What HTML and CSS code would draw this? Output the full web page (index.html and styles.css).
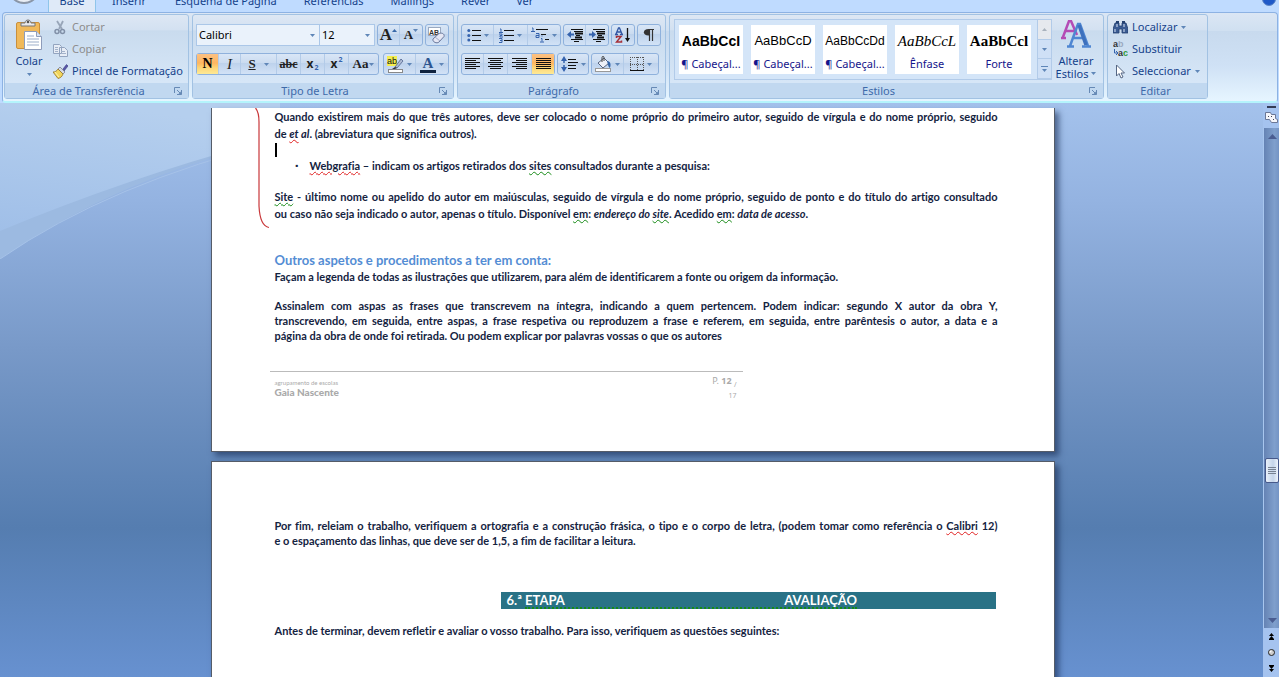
FILE: index.html
```html
<!DOCTYPE html>
<html lang="pt">
<head>
<meta charset="utf-8">
<title>Documento</title>
<link rel="stylesheet" href="styles.css">
</head>
<body>
<svg class="defs" aria-hidden="true">
  <symbol id="arrow" viewBox="0 0 5 3"><path d="M0 0h5L2.500 3z" fill="#5f86b8"/></symbol>
  <symbol id="launcher" viewBox="0 0 8 8"><path d="M.5 6V.5H6" fill="none" stroke="#6689b5"/><path d="M3 3l3 3M7.500 3v4.500H3" fill="none" stroke="#6689b5"/><path d="M4 7.500h3.500V4z" fill="#6689b5"/></symbol>
</svg>

<header class="tabs">
  <button class="office" aria-label="Botão Office"></button>
  <nav class="tablist">
    <a class="tab active" href="#base">Base</a>
    <a class="tab t-inserir" href="#inserir">Inserir</a>
    <a class="tab t-esquema" href="#esquema">Esquema de Página</a>
    <a class="tab t-ref" href="#referencias">Referências</a>
    <a class="tab t-mail" href="#mailings">Mailings</a>
    <a class="tab t-rever" href="#rever">Rever</a>
    <a class="tab" href="#ver">Ver</a>
  </nav>
  <button class="help" aria-label="Ajuda"></button>
</header>

<section class="ribbon">
  <section class="group g-clip">
    <div class="clip-body">
      <button class="big">
        <svg width="28" height="32" viewBox="0 0 28 32"><rect x="1.500" y="3.500" width="23" height="26" rx="1.500" fill="#f0b95a" stroke="#c98f3c"/><path d="M6 7V4h4c0-4 6-4 6 0h4v3z" fill="#e8e8ea" stroke="#777"/><circle cx="13" cy="3" r="1.300" fill="#555"/><path d="M9.500 12.500h12l5 5v13h-17z" fill="#fff" stroke="#8e9cba"/><path d="M21.500 12.500v5h5" fill="#d8e2f0" stroke="#8e9cba"/><path d="M12 17h7M12 20h12M12 23h12M12 26h12" stroke="#9badc9"/></svg>
        <span>Colar</span>
        <svg class="arr" width="5" height="3"><use href="#arrow"/></svg>
      </button>
      <div class="stack">
        <button class="cmd off"><svg width="15" height="15" viewBox="0 0 15 15"><path d="M4 1l5 8M10 1L6 9" stroke="#98a5b8" stroke-width="1.800"/><circle cx="4" cy="11.500" r="2" fill="none" stroke="#8190a8" stroke-width="1.500"/><circle cx="9.500" cy="11.500" r="2" fill="none" stroke="#8190a8" stroke-width="1.500"/></svg>Cortar</button>
        <button class="cmd off"><svg width="15" height="15" viewBox="0 0 15 15"><path d="M.5 2.500h6l2 2v7h-8zM6.500 5.500h5l3 3v6h-8z" fill="#e7edf6" stroke="#93a4bf"/><path d="M2 5.500h3M2 7.500h3M2 9.500h3M8 9.500h4M8 11.500h5" stroke="#a3b2ca"/></svg>Copiar</button>
        <button class="cmd"><svg width="15" height="15" viewBox="0 0 15 15"><path d="M10 5l3.500-4.500L15 2l-4 5z" fill="#5a55a8" stroke="#333a80" stroke-width=".6"/><path d="M7 3l5 5-2 2-5-5z" fill="#d5d9e4" stroke="#6a7080" stroke-width=".7"/><path d="M5 5l5 5c-1 3-3 4-5 4.500L0 8c2 0 4-1 5-3z" fill="#f1d55b" stroke="#94762b" stroke-width=".8"/><path d="M2 8l4 5" stroke="#fff4af"/></svg>Pincel de Formatação</button>
      </div>
    </div>
    <footer class="caption"><span>Área de Transferência</span><button class="launch" aria-label="Abrir Área de Transferência"><svg width="8" height="8"><use href="#launcher"/></svg></button></footer>
  </section>

  <section class="group g-font">
    <div class="rows">
      <div class="row">
        <div class="combos">
          <span class="combo c-name"><select aria-label="Tipo de letra"><option>Calibri</option></select><svg width="5" height="3"><use href="#arrow"/></svg></span>
          <span class="combo c-size"><select aria-label="Tamanho"><option>12</option></select><svg width="5" height="3"><use href="#arrow"/></svg></span>
        </div>
        <div class="set">
          <button class="b22 serif grow" aria-label="Aumentar">A<svg width="5" height="3" viewBox="0 0 5 3"><path d="M0 3h5L2.500 0z" fill="#3868a8"/></svg></button>
          <button class="b22 serif shrink" aria-label="Diminuir">A<svg width="5" height="3"><use href="#arrow"/></svg></button>
        </div>
        <div class="set">
          <button class="b22" aria-label="Limpar formatação"><svg width="18" height="18" viewBox="0 0 18 18"><rect x=".5" y="1.500" width="12" height="8" fill="#fff" stroke="#9aa9c0"/><text x="1" y="8.500" font-size="7" font-weight="700" font-family="Liberation Sans" fill="#333">AB</text><path d="M5 13l6-5.500c2-1 6 0 5 3L11 16c-2 2-7 0-6-3z" fill="#e5e7f4" stroke="#6a789c"/><path d="M7 11l5 4" stroke="#a5aecb"/></svg></button>
        </div>
      </div>
      <div class="row">
        <div class="set">
          <button class="b22 serif on heavy">N</button>
          <button class="b22 serif it">I</button>
          <button class="b36 serif un"><u>S</u><svg width="5" height="3"><use href="#arrow"/></svg></button>
          <button class="b24 serif st"><s>abc</s></button>
          <button class="b24 sx">x<small class="low">2</small></button>
          <button class="b24 sx">x<small class="high">2</small></button>
          <button class="b28 serif aa">Aa<svg width="5" height="3"><use href="#arrow"/></svg></button>
        </div>
        <div class="set">
          <button class="b32" aria-label="Realce"><svg width="17" height="17" viewBox="0 0 17 17"><rect width="10" height="10" fill="#f4ee4e"/><text x="0" y="8" font-size="9" font-family="Liberation Sans" fill="#111">ab</text><path d="M8 11l6-8 2 2-6 7z" fill="#aebbd4" stroke="#4f628c" stroke-width=".8"/><path d="M5 13l3-2 2 1-2 1z" fill="#333"/><rect x="1.500" y="13.500" width="14" height="3" fill="#fff" stroke="#888"/></svg><svg width="5" height="3"><use href="#arrow"/></svg></button>
          <button class="b32 serif ink"><span>A</span><svg width="5" height="3"><use href="#arrow"/></svg></button>
        </div>
      </div>
    </div>
    <footer class="caption"><span>Tipo de Letra</span><button class="launch" aria-label="Abrir Tipo de Letra"><svg width="8" height="8"><use href="#launcher"/></svg></button></footer>
  </section>

  <section class="group g-para">
    <div class="rows">
      <div class="row">
        <div class="set">
          <button class="b32" aria-label="Marcas"><svg width="14" height="14" viewBox="0 0 14 14"><path d="M5 2.500h9M5 7.500h9M5 12.500h9" stroke="#111"/><g fill="#3563ad"><circle cx="1.800" cy="2.500" r="1.500"/><circle cx="1.800" cy="7.500" r="1.500"/><circle cx="1.800" cy="12" r="1.500"/></g></svg><svg width="5" height="3"><use href="#arrow"/></svg></button>
          <button class="b34" aria-label="Numeração"><svg width="15" height="15" viewBox="0 0 15 15"><path d="M5 2.500h10M5 7.500h10M5 12.500h10" stroke="#111"/><path d="M1 1h1v3M0 4.500h4M0 6h3v1.500H1V9h3M0 10.500h3v4H0M1 12.500h2" stroke="#3563ad" fill="none"/></svg><svg width="5" height="3"><use href="#arrow"/></svg></button>
          <button class="b32" aria-label="Lista multinível"><svg width="18" height="16" viewBox="0 0 18 16"><path d="M5 2.500h12M10 7.500h5M14 12.500h4" stroke="#111"/><path d="M1 1h1v3M0 4.500h4M5 6.500h3v4H5v-2h3M11 8.500v1M10 11.500h1v3M9 15h4" stroke="#3563ad" fill="none"/></svg><svg width="5" height="3"><use href="#arrow"/></svg></button>
        </div>
        <div class="set">
          <button class="b22" aria-label="Diminuir avanço"><svg width="16" height="14" viewBox="0 0 16 14"><path d="M4 1.500h12M7 3.500h9M9 7.500h4M4 11.500h12M7 13.500h5" stroke="#111"/><path d="M8 5.500h8M8 9.500h7" stroke="#111" stroke-width="2"/><path d="M0 6.500L4 3v7z" fill="#3563ad"/><path d="M3 6.500h4" stroke="#3563ad" stroke-width="2"/></svg></button>
          <button class="b22" aria-label="Aumentar avanço"><svg width="16" height="14" viewBox="0 0 16 14"><path d="M4 1.500h12M7 3.500h9M9 7.500h4M4 11.500h12M7 13.500h5" stroke="#111"/><path d="M8 5.500h8M8 9.500h7" stroke="#111" stroke-width="2"/><path d="M7 6.500L3 3v7z" fill="#3563ad"/><path d="M0 6.500h4" stroke="#3563ad" stroke-width="2"/></svg></button>
        </div>
        <div class="set">
          <button class="b22" aria-label="Ordenar"><svg width="16" height="16" viewBox="0 0 16 16"><path d="M1 7L3.500 1h1L7 7M2 5h4M0 7.500h3M5 7.500h3" stroke="#3157a3" fill="none" stroke-width="1.300"/><path d="M1.500 11V9.500H6L1.500 15H6.500v-1.500" stroke="#a52f38" fill="none" stroke-width="1.500"/><path d="M12.500 1v11" stroke="#111" stroke-width="1.300"/><path d="M10 11h5l-2.500 4z" fill="#111"/></svg></button>
        </div>
        <div class="set">
          <button class="b22" aria-label="Mostrar tudo"><svg width="12" height="14" viewBox="0 0 12 14"><path d="M11 1.500H5.500M6.500 1v12M9.500 1v12" stroke="#333" stroke-width="1.200"/><path d="M7 1C-1 0-1 8 6 7.500z" fill="#333"/></svg></button>
        </div>
      </div>
      <div class="row">
        <div class="set">
          <button class="b22" aria-label="Esquerda"><svg width="15" height="12" viewBox="0 0 15 12"><path d="M0 .5h15M0 2.500h11M0 4.500h15M0 6.500h11M0 8.500h15M0 10.500h11" stroke="#111"/></svg></button>
          <button class="b24" aria-label="Centrar"><svg width="15" height="12" viewBox="0 0 15 12"><path d="M0 .5h15M2 2.500h11M0 4.500h15M2 6.500h11M0 8.500h15M2 10.500h11" stroke="#111"/></svg></button>
          <button class="b24" aria-label="Direita"><svg width="15" height="12" viewBox="0 0 15 12"><path d="M0 .5h15M4 2.500h11M0 4.500h15M4 6.500h11M0 8.500h15M4 10.500h11" stroke="#111"/></svg></button>
          <button class="b22 on" aria-label="Justificar"><svg width="15" height="12" viewBox="0 0 15 12"><path d="M0 .5h15M0 2.500h15M0 4.500h15M0 6.500h15M0 8.500h15M0 10.500h15" stroke="#111"/></svg></button>
        </div>
        <div class="set">
          <button class="b30" aria-label="Espaçamento"><svg width="17" height="16" viewBox="0 0 17 16"><path d="M7 3.500h8M7 6.500h10M7 9.500h8M7 12.500h8" stroke="#111"/><path d="M0 5L3 0l3 5zM0 11l3 5 3-5z" fill="#3563ad"/><path d="M3 4v3M3 9v3" stroke="#3563ad" stroke-width="1.500"/></svg><svg width="5" height="3"><use href="#arrow"/></svg></button>
        </div>
        <div class="set tail">
          <button class="b32" aria-label="Sombreado"><svg width="17" height="16" viewBox="0 0 17 16"><path d="M3 7l6-5 5 5-6 5z" fill="#eef1f8" stroke="#55627c"/><path d="M7 6V1.500C7 0 9 0 9 1.500V5" fill="none" stroke="#444"/><path d="M12 5c4 0 4 4 3 7-2-1-2-4-3-7z" fill="#3465a8"/><rect x=".5" y="12.500" width="15" height="3" fill="#fff" stroke="#999"/></svg><svg width="5" height="3"><use href="#arrow"/></svg></button>
          <button class="b34" aria-label="Limites"><svg width="14" height="15" viewBox="0 0 14 15"><path d="M0 .5h14M0 7.500h14M.5 0v13M7.500 0v13M13.500 0v13" stroke="#555" stroke-dasharray="1 1"/><path d="M0 13.500h14" stroke="#111"/></svg><svg width="5" height="3"><use href="#arrow"/></svg></button>
        </div>
      </div>
    </div>
    <footer class="caption"><span>Parágrafo</span><button class="launch" aria-label="Abrir Parágrafo"><svg width="8" height="8"><use href="#launcher"/></svg></button></footer>
  </section>

  <section class="group g-styles">
    <div class="styles-body">
      <div class="gallery">
        <div class="cells">
          <button class="cell"><b class="s1">AaBbCcI</b><span>¶ Cabeçal...</span></button>
          <button class="cell"><b class="s2">AaBbCcD</b><span>¶ Cabeçal...</span></button>
          <button class="cell"><b class="s3">AaBbCcDd</b><span>¶ Cabeçal...</span></button>
          <button class="cell"><b class="s4">AaBbCcL</b><span>Ênfase</span></button>
          <button class="cell"><b class="s5">AaBbCcl</b><span>Forte</span></button>
        </div>
        <div class="scroller">
          <button aria-label="Acima" class="dim"><svg width="5" height="3" viewBox="0 0 5 3"><path d="M0 3h5L2.500 0z" fill="#a9b2bd"/></svg></button>
          <button aria-label="Abaixo"><svg width="5" height="3"><use href="#arrow"/></svg></button>
          <button aria-label="Mais"><svg width="7" height="6" viewBox="0 0 7 6"><path d="M0 .5h7" stroke="#5f86b8"/><path d="M1 3h5L3.500 6z" fill="#5f86b8"/></svg></button>
        </div>
      </div>
      <button class="big change">
        <svg width="30" height="28" viewBox="0 0 30 28"><path d="M2 17L8 1h2l6 14M4 11h9M0 18h5" fill="none" stroke="#b44bb5" stroke-width="2.500"/><path d="M9 26L17 4h2l8 22M12 18h12M6 26.500h7M21 26.500h9" fill="none" stroke="#4f86d2" stroke-width="2.500"/><path d="M18 5l7 20" stroke="#3d70bd" stroke-width="3.500"/></svg>
        <span>Alterar</span>
        <span>Estilos <svg width="5" height="3"><use href="#arrow"/></svg></span>
      </button>
    </div>
    <footer class="caption"><span>Estilos</span><button class="launch" aria-label="Abrir Estilos"><svg width="8" height="8"><use href="#launcher"/></svg></button></footer>
  </section>

  <section class="group g-edit">
    <div class="stack edit-body">
      <button class="cmd"><svg width="15" height="15" viewBox="0 0 15 15"><path d="M2 3h4v3h3V3h4l2 6v4H9V9H6v4H0V9z" fill="#3a5b93" stroke="#24406f" stroke-width=".8"/><path d="M3 1h3v2H3zM9 1h3v2H9z" fill="#24406f"/><path d="M2 9v3M11 9v3M4 4v3M11 4v3" stroke="#dce7f7"/></svg>Localizar<svg width="5" height="3"><use href="#arrow"/></svg></button>
      <button class="cmd"><svg width="15" height="16" viewBox="0 0 15 16"><text x="0" y="6" font-size="9" font-weight="700" font-family="Liberation Sans" fill="#333">a<tspan fill="#9aa9c0">b</tspan></text><text x="5" y="15" font-size="9" font-weight="700" font-family="Liberation Sans" fill="#333">a<tspan fill="#2f9a3a">c</tspan></text><path d="M1.500 8v4h3M3 10l2 2-2 2" fill="none" stroke="#3563ad"/></svg>Substituir</button>
      <button class="cmd"><svg width="15" height="15" viewBox="0 0 15 15"><path d="M3.500 1v11l2.500-2.500 2 4.500 2-1-2-4h3.500z" fill="#fff" stroke="#566784"/></svg>Seleccionar<svg width="5" height="3"><use href="#arrow"/></svg></button>
    </div>
    <footer class="caption"><span>Editar</span></footer>
  </section>
</section>

<main class="workspace">
  <svg class="aurora" width="280" height="156" viewBox="0 0 280 156" aria-hidden="true">
    <defs><linearGradient id="sky" x1="0" y1="1" x2=".3" y2="0"><stop offset="0" stop-color="#a0bfe8"/><stop offset="1" stop-color="#b5cfee"/></linearGradient></defs>
    <path d="M0 0h280v38Q130 68 0 156z" fill="#9cbae1"/>
    <path d="M0 0h280v34Q140 70 0 128z" fill="url(#sky)"/>
    <path d="M0 156Q110 80 280 38" fill="none" stroke="#a6c2e8"/>
  </svg>
  <div class="canvas">
    <article class="page first">
      <svg class="brace" width="14" height="121" viewBox="0 0 14 121" aria-hidden="true"><path d="M.5 0Q4 4 4 14V98Q5 118 14 119.500" fill="none" stroke="#c9373a" stroke-width="1.200"/></svg>
      <p class="loose"><span class="full">Quando existirem mais do que três autores, deve ser colocado o nome próprio do primeiro autor, seguido de vírgula e do nome próprio, seguido</span> <span class="end">de <i><span class="spell">et</span> al</i>. (abreviatura que significa outros).</span></p>
      <div class="caret"></div>
      <ul class="bullets"><li><span class="spell">Webgrafia</span> – indicam os artigos retirados dos <span class="gram">sites</span> consultados durante a pesquisa:</li></ul>
      <p class="loose"><span class="full"><span class="gram">Site</span> - último nome ou apelido do autor em maiúsculas, seguido de vírgula e do nome próprio, seguido de ponto e do título do artigo consultado</span> <span class="end">ou caso não seja indicado o autor, apenas o título. Disponível <span class="gram">em</span>: <i>endereço do <span class="gram">site</span></i>. Acedido <span class="gram">em</span>: <i>data de acesso</i>.</span></p>
      <h2>Outros aspetos e procedimentos a ter em conta:</h2>
      <p class="legend">Façam a legenda de todas as ilustrações que utilizarem, para além de identificarem a fonte ou origem da informação.</p>
      <p><span class="full">Assinalem com aspas as frases que transcrevem na íntegra, indicando a quem pertencem. Podem indicar: segundo X autor da obra Y,</span> <span class="full">transcrevendo, em seguida, entre aspas, a frase respetiva ou reproduzem a frase e referem, em seguida, entre parêntesis o autor, a data e a</span> <span class="end">página da obra de onde foi retirada. Ou podem explicar por palavras vossas o que os autores</span></p>
      <footer class="pagefoot">
        <div class="school"><small>agrupamento de escolas</small><strong>Gaia Nascente</strong></div>
        <div class="num">P. <b>12</b> <sub>/</sub><small>17</small></div>
      </footer>
    </article>
    <article class="page second">
      <p><span class="full">Por fim, releiam o trabalho, verifiquem a ortografia e a construção frásica, o tipo e o corpo de letra, (podem tomar como referência o <span class="spell">Calibri</span> 12)</span> <span class="end">e o espaçamento das linhas, que deve ser de 1,5, a fim de facilitar a leitura.</span></p>
      <h3 class="stage"><span>6.ª&nbsp;</span><span class="marked"><span>ETAPA</span><span>AVALIAÇÃO</span></span></h3>
      <p>Antes de terminar, devem refletir e avaliar o vosso trabalho. Para isso, verifiquem as questões seguintes:</p>
    </article>
  </div>
  <aside class="scroll">
    <div class="scroll-top">
      <i class="split"></i>
      <button aria-label="Régua"><svg width="13" height="11" viewBox="0 0 13 11"><path d="M.5.5h5l1 2h4v4l2 1v3h-6l-2-3h-4z" fill="#f5f6fb" stroke="#6b7796"/><path d="M3 4l1 1M6 4l1 1M8 7l1 1" stroke="#445"/></svg></button>
    </div>
    <div class="track">
      <button aria-label="Subir"><svg width="9" height="5" viewBox="0 0 9 5"><path d="M0 5h9L4.500 0z" fill="#4a5d91"/></svg></button>
      <span class="above"></span>
      <button class="thumb" aria-label="Posição"><svg width="8" height="8" viewBox="0 0 8 8"><path d="M0 .5h8M0 2.500h8M0 4.500h8M0 6.500h8" stroke="#788292"/></svg></button>
      <span class="below"></span>
      <button aria-label="Descer"><svg width="9" height="5" viewBox="0 0 9 5"><path d="M0 0h9L4.500 5z" fill="#4a5d91"/></svg></button>
    </div>
    <div class="browse">
      <button aria-label="Página anterior"><svg width="5" height="7" viewBox="0 0 5 7"><path d="M0 3h5L2.500 0zM0 6h5L2.500 3z" fill="#000"/><path d="M0 6.500h5" stroke="#000"/></svg></button>
      <button aria-label="Seleccionar objecto"><svg width="7" height="7" viewBox="0 0 7 7"><circle cx="3.500" cy="3.500" r="3" fill="#ccc" stroke="#222"/><circle cx="2.500" cy="2.500" r="1" fill="#fff"/></svg></button>
      <button aria-label="Página seguinte"><svg width="5" height="7" viewBox="0 0 5 7"><path d="M0 .5h5" stroke="#000"/><path d="M0 1h5L2.500 4zM0 4h5L2.500 7z" fill="#000"/></svg></button>
    </div>
  </aside>
</main>
</body>
</html>
```
FILE: styles.css
```css
* { box-sizing: border-box; }
html, body { height: 100%; }
body {
  margin: 0;
  display: flex;
  flex-direction: column;
  overflow: hidden;
  background: #bfdbff;
  font: 11px/14px "Noto Sans", sans-serif;
  color: #15428b;
}
button {
  margin: 0;
  padding: 0;
  border: 0;
  background: none;
  font: inherit;
  color: inherit;
  white-space: nowrap;
}
svg { display: block; flex: none; }
.defs { position: absolute; width: 0; height: 0; }

/* tab strip */
.tabs {
  display: flex;
  align-items: flex-end;
  height: 12px;
  flex: none;
  overflow: hidden;
  background: #bfdbff;
}
.office {
  width: 32px;
  height: 32px;
  margin: 0 8px 8px;
  border: 2px solid #8a96a8;
  border-radius: 50%;
  background: #e9eef5;
}
.tablist { display: flex; align-items: flex-end; flex: 1; }
.tab {
  padding: 0 13px 4px;
  color: #15428b;
  text-decoration: none;
}
.tab.active {
  width: 48px;
  padding: 0 0 4px;
  text-align: center;
  background: #dfeaf8;
  border: solid #8fc5ea;
  border-width: 0 1px;
}
.t-inserir { padding-left: 16px; padding-right: 15px; }
.t-esquema, .t-ref, .t-mail, .t-rever { padding-left: 14px; padding-right: 13px; }
.help {
  width: 14px;
  height: 14px;
  margin: 0 3px 6px;
  border: 1px solid #5e86c5;
  border-radius: 50%;
  background: #1f59c8;
}

/* ribbon */
.ribbon {
  display: flex;
  gap: 3px;
  flex: none;
  margin: 0 1px 0 2px;
  padding: 1px 1px 2px;
  border: 1px solid #8db2e3;
  border-bottom: 2px solid #b4f4fc;
  border-radius: 4px;
  background: linear-gradient(#dbe6f4, #d0e0f1 20%, #c8daee 21%, #cfe1f5 60%, #e6f5ff);
}
.group {
  display: flex;
  flex-direction: column;
  height: 85px;
  flex: none;
  border: 1px solid #a2c2e3;
  border-radius: 3px;
  background: linear-gradient(#dde7f4, #d3e1f1 18%, #c9dbee 19%, #d6e6f7 80%);
}
.g-clip { width: 185px; }
.g-font { width: 262px; }
.g-para { width: 209px; }
.g-styles { width: 435px; }
.g-edit { width: 101px; }
.caption {
  display: flex;
  align-items: center;
  height: 15px;
  margin-top: auto;
  padding-right: 4px;
  background: #c1d8f0;
  color: #3e6aaa;
}
.caption span { flex: 1; text-align: center; }
.launch { padding: 2px; }

.clip-body { display: flex; padding: 1px 4px 0 3px; }
.big {
  display: flex;
  flex-direction: column;
  align-items: center;
  width: 42px;
}
.clip-body .big { padding-top: 3px; }
.big .arr { margin-top: 5px; }
.big svg + span { margin-top: 3px; }
.stack { display: flex; flex-direction: column; }
.cmd {
  display: flex;
  align-items: center;
  gap: 4px;
  height: 22px;
  padding-left: 3px;
}
.off { color: #8d8d8d; }

.rows {
  display: flex;
  flex-direction: column;
  gap: 7px;
  padding: 9px 3px 0;
}
.row { display: flex; justify-content: space-between; padding-right: 1px; }
.combos { display: flex; }
.combo {
  position: relative;
  display: flex;
  height: 22px;
  border: 1px solid #abc7e8;
  background: #eaf2fb;
}
.c-name { width: 124px; }
.c-size { width: 56px; margin-left: -1px; }
.combo select {
  width: 100%;
  padding: 0 2px;
  border: 0;
  appearance: none;
  background: none;
  font: inherit;
  color: #000;
}
.combo svg { position: absolute; right: 4px; top: 9px; }
.set {
  display: flex;
  height: 22px;
  border: 1px solid #8fb1dc;
  border-radius: 3px;
  background: linear-gradient(#d9e6f6, #cadbf0 45%, #bdd2ec 46%, #d2e2f6);
}
.set button {
  display: flex;
  align-items: center;
  justify-content: center;
  gap: 3px;
  border-right: 1px solid #b3cbe8;
}
.set button:last-child { border-right: 0; }
.tail { margin-right: 2px; }
.b22 { width: 22px; }
.b24 { width: 24px; }
.b28 { width: 29px; }
.b30 { width: 30px; }
.b32 { width: 32px; }
.b34 { width: 34px; }
.b36 { width: 36px; }
.set .on { background: linear-gradient(#fcc183, #fdb661 45%, #fdd677 70%, #fde996); color: #000; }
.serif { font: 700 13px/16px "Liberation Serif", serif; color: #222; }
.set .grow, .set .shrink { gap: 0; align-items: center; }
.heavy { font-size: 14px; }
.grow { font-size: 17px; }
.grow svg, .shrink svg { align-self: flex-start; margin-top: 4px; }
.it { font-style: italic; font-weight: 400; font-size: 15px; }
.set .un { gap: 8px; }
.st { font-size: 12px; }
.sx { font: 700 12px/14px "Noto Sans", sans-serif; color: #222; }
.set .sx { gap: 1px; }
.sx small { font-size: 7px; line-height: 8px; color: #3563ad; }
.low { align-self: flex-end; padding-bottom: 2px; }
.high { align-self: flex-start; padding-top: 2px; }
.set .st, .set .aa { gap: 1px; }
.ink { font-size: 15px; color: #2d5590; }
.ink span { width: 16px; line-height: 14px; border-bottom: 3px solid #10233f; }

/* style gallery */
.styles-body { display: flex; padding: 4px 4px 0; gap: 3px; }
.gallery {
  display: flex;
  width: 378px;
  height: 61px;
  border: 1px solid #b2cbe9;
  background: #d4e5f8;
}
.cells { display: flex; gap: 8px; padding: 5px 4px; flex: 1; }
.cell {
  display: flex;
  flex-direction: column;
  align-items: center;
  justify-content: space-between;
  width: 64px;
  padding: 7px 0 3px;
  background: #fff;
  color: #15158b;
  overflow: hidden;
}
.cell b { color: #000; line-height: 18px; }
.cell .s1 { font: 700 14px/18px "Liberation Sans", sans-serif; }
.cell .s2 { font: 400 13px/18px "Liberation Sans", sans-serif; }
.cell .s3 { font: 400 12px/18px "Liberation Sans", sans-serif; }
.cell .s4 { font: italic 400 15px/18px "Liberation Serif", serif; }
.cell .s5 { font: 700 15px/18px "Liberation Serif", serif; }
.scroller { display: flex; flex-direction: column; width: 14px; }
.scroller button {
  display: flex;
  align-items: center;
  justify-content: center;
  flex: 1;
  border-left: 1px solid #b2cbe9;
  border-bottom: 1px solid #b2cbe9;
  background: #cfe0f6;
}
.scroller .dim { background: #e6e9ee; }
.change { line-height: 13px; padding-top: 1px; }
.change span { display: flex; align-items: center; gap: 3px; }
.change svg + span { margin-top: 6px; }
.edit-body { padding: 1px 0 0 2px; }

/* document area */
.workspace {
  position: relative;
  display: flex;
  flex: 1;
  min-height: 0;
  background: linear-gradient(#a4c2ec, #94b3e1 17%, #7899c8 43%, #557db0 74%, #6791d0);
}
.aurora { position: absolute; left: 0; top: 0; }
.canvas {
  position: relative;
  flex: 1;
  padding: 5px 8px 0 10px;
  overflow: hidden;
}
.page {
  position: relative;
  width: 844px;
  max-width: 100%;
  margin: 0 auto 9px;
  padding: 0 56px 0 63px;
  border: 1px solid #555c68;
  background: #fff;
  box-shadow: 4px 4px 6px rgba(20, 40, 80, .6);
  color: #14233f;
  font: 700 11px/15px Lato, sans-serif;
  font-variant-ligatures: none;
}
.first { border-top: 0; padding-bottom: 49px; }
.page p { margin: 0; }
.page .loose { line-height: 17px; }
.full, .end { display: block; }
.full { text-align-last: justify; }
.spell { text-decoration: underline wavy #e02020 1px; }
.gram { text-decoration: underline wavy #168a16 1px; }
.brace { position: absolute; left: 43px; top: 0; }
.caret { width: 2px; height: 14px; margin: 1px 0 0; background: #000; }
.bullets {
  margin: 0 0 14px;
  padding: 0 0 0 35px;
  line-height: 17px;
  list-style: none;
}
.bullets li::before { content: "▪"; float: left; margin-left: -14px; font-size: 7px; }
.page h2 {
  margin: 29px 0 0;
  font: 700 13px/18px Lato, sans-serif;
  font-variant-ligatures: none;
  color: #548dd4;
}
.page .legend { margin-bottom: 14px; line-height: 15px; }
.pagefoot {
  display: flex;
  justify-content: space-between;
  width: 473px;
  margin: 28px 0 0 -5px;
  padding: 2px 6px 0 5px;
  border-top: 1px solid #bbb;
  color: #aaa;
}
.school { display: flex; flex-direction: column; padding-top: 4px; line-height: 10px; font-size: 10px; }
.school small { font-size: 6px; line-height: 9px; font-weight: 400; }
.num { width: 26px; font: 400 9px/13px "Noto Sans", sans-serif; text-align: right; white-space: nowrap; }
.num small { display: block; font-size: 7px; }
.num sub { font-size: 7px; line-height: 8px; }
.second { padding-top: 56px; min-height: 300px; }
.stage {
  display: flex;
  width: 495px;
  margin: 44px 2px 14px auto;
  padding: 1px 0 0 6px;
  background: #297286;
  color: #fff;
  font: 700 13px/14px Lato, sans-serif;
}
.marked {
  display: flex;
  justify-content: space-between;
  width: 332px;
  border-bottom: 2px dotted #168a16;
}

/* vertical scroll bar */
.scroll { position: relative; display: flex; flex-direction: column; width: 16px; flex: none; background: #a5c3ef; }
.scroll button { display: flex; align-items: center; justify-content: center; flex: none; }
.scroll-top { display: flex; flex-direction: column; align-items: center; gap: 4px; padding: 3px 0 5px; }
.split { width: 9px; height: 2px; background: #333c55; }
.track {
  display: flex;
  flex-direction: column;
  flex: 1;
  padding: 6px 0 5px 1px;
  border-left: 1px solid #a8c6ee;
  background: linear-gradient(90deg, #6583b4, #7f9fcc 70%, #7494c4);
}
.above { flex: 320; }
.below { flex: 135; }
.scroll .thumb {
  height: 25px;
  border: 1px solid #47598a;
  border-radius: 2px;
  background: linear-gradient(90deg, #e8f0fa, #c5d5ea 60%, #eef4fc);
}
.browse { display: flex; flex-direction: column; justify-content: space-around; height: 49px; }
```
